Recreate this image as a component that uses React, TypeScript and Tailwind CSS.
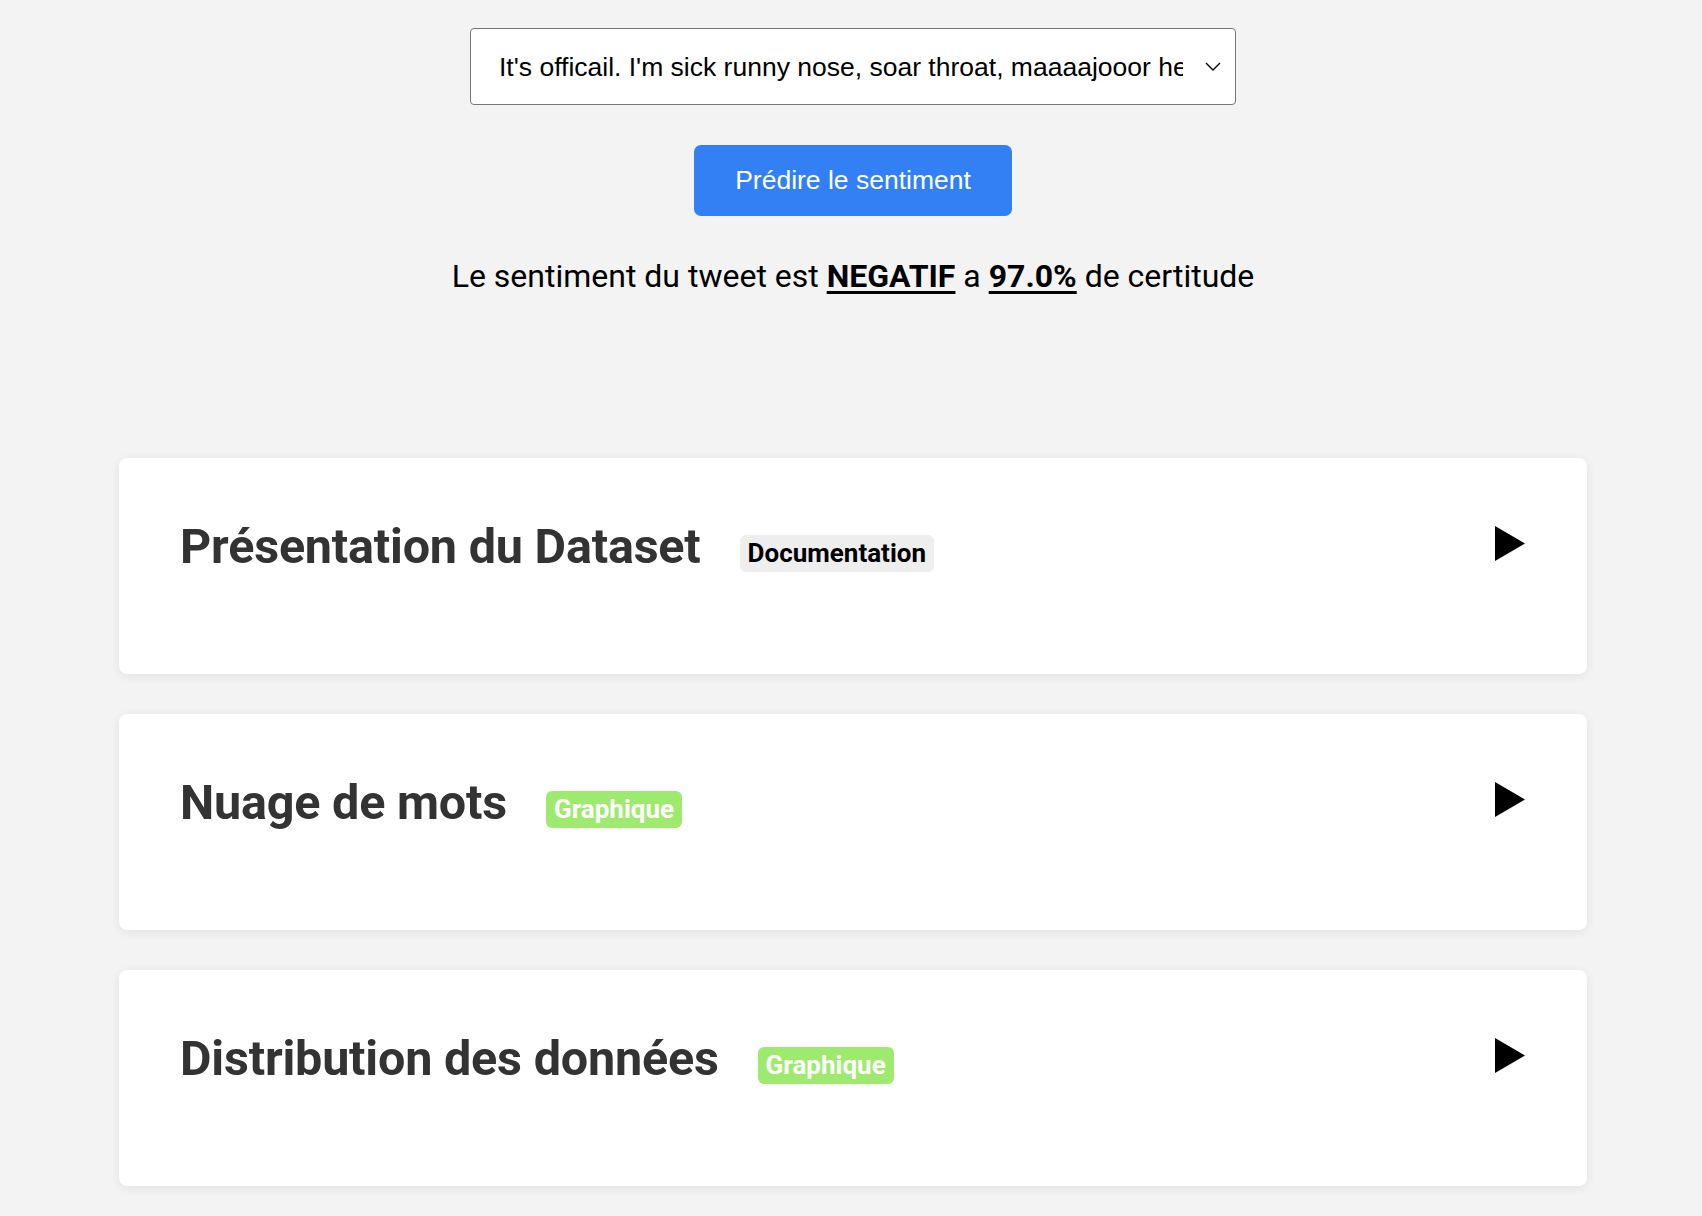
const TWEET =
  "It's officail. I'm sick runny nose, soar throat, maaaajooor headache. I want my mommy";

const sections = [
  { title: "Présentation du Dataset", tag: "Documentation", kind: "doc" },
  { title: "Nuage de mots", tag: "Graphique", kind: "chart" },
  { title: "Distribution des données", tag: "Graphique", kind: "chart" },
];

function Section({ title, tag, kind }: { title: string; tag: string; kind: string }) {
  return (
    <div className="bg-white rounded-[8px] shadow-[0_2px_10px_rgba(0,0,0,0.08)] h-[216px] pl-[61px] pr-[62px] pt-[60px]">
      <div className="flex items-center">
        <h2 className="text-[48.5px] leading-[58px] font-bold text-[#333333] tracking-[-0.2px]">{title}</h2>
        <span
          className={
            kind === "doc"
              ? "ml-[39px] mt-[13px] px-[8px] h-[37px] flex items-center rounded-[6px] bg-[#eeeeee] text-black text-[26px] font-bold"
              : "ml-[39px] mt-[13px] px-[8px] h-[37px] flex items-center rounded-[6px] bg-[#9eea6e] text-white text-[26px] font-bold"
          }
        >
          {tag}
        </span>
        <svg className="ml-auto mb-[7px]" width="30" height="35" viewBox="0 0 30 35">
          <polygon points="0,0 30,17.5 0,35" fill="#000" />
        </svg>
      </div>
    </div>
  );
}

export default function App() {
  return (
    <div className="min-h-[1216px] bg-[#f3f3f3] font-['Roboto',sans-serif] pt-[28px]">
      <div className="flex flex-col items-center">
        <div className="relative ml-[4px] w-[766px] h-[77px] bg-white border border-[#767676] rounded-[4px] flex items-center">
          <span className="ml-[28px] mt-[2px] w-[684px] whitespace-nowrap overflow-hidden font-['Liberation_Sans',Arial,sans-serif] text-[26.5px] text-black">
            {TWEET}
          </span>
          <svg className="absolute right-[14px] top-[33px]" width="16" height="10" viewBox="0 0 16 10">
            <polyline points="1,1 8,8 15,1" fill="none" stroke="#000" strokeWidth="1.4" />
          </svg>
        </div>
        <button className="mt-[40px] ml-[4px] w-[318px] h-[71px] rounded-[7px] bg-[#3380f5] text-white font-['Liberation_Sans',Arial,sans-serif] text-[26.5px]">
          Prédire le sentiment
        </button>
        <p className="mt-[36px] ml-[4px] text-[32px] text-black">
          Le sentiment du tweet est <b className="underline underline-offset-[4px]">NEGATIF</b> a{" "}
          <b className="underline underline-offset-[4px]">97.0%</b> de certitude
        </p>
      </div>
      <div className="mt-[158px] ml-[119px] w-[1468px] flex flex-col gap-[40px]">
        {sections.map((s) => (
          <Section key={s.title} {...s} />
        ))}
      </div>
    </div>
  );
}
